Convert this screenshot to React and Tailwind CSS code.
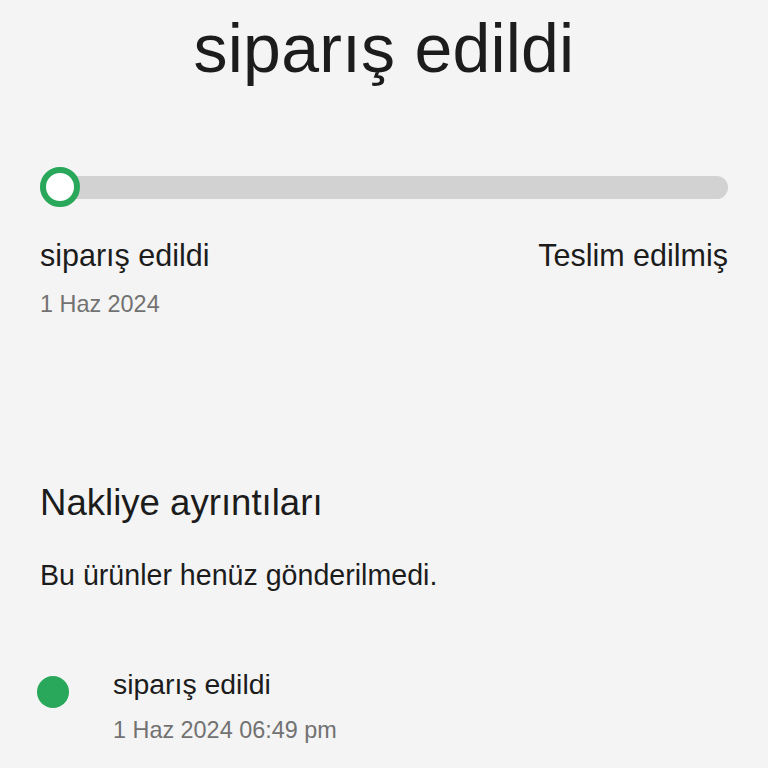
export default function App() {
  const font = { fontFamily: '"Liberation Sans", Arial, sans-serif' };
  return (
    <div className="w-[768px] h-[768px] bg-[#f4f4f4] overflow-hidden text-[#1c1c1c]" style={font}>
      <div className="pt-[14px] text-center text-[68px] leading-[68px] tracking-[0.2px]">siparış edildi</div>

      <div className="mx-[40px] mt-[85px] relative h-[40px] flex items-center">
        <div className="w-full h-[23px] rounded-full bg-[#d2d2d2]" />
        <div className="absolute left-0 top-0 w-[40px] h-[40px] rounded-full border-[6px] border-[#29a85b] bg-white" />
      </div>

      <div className="mx-[40px] mt-[30px] flex justify-between text-[30.5px] leading-[36px]">
        <span>siparış edildi</span>
        <span>Teslim edilmiş</span>
      </div>
      <div className="mx-[40px] mt-[16px] text-[23.4px] leading-[30px] text-[#727272]">1 Haz 2024</div>

      <div className="mx-[40px] mt-[162px] text-[36.6px] leading-[44px]">Nakliye ayrıntıları</div>
      <div className="mx-[40px] mt-[33px] text-[28.6px] leading-[34px]">Bu ürünler henüz gönderilmedi.</div>

      <div className="mt-[75px] flex">
        <div className="w-[113px] pl-[37px] pt-[9px]">
          <div className="w-[32px] h-[32px] rounded-full bg-[#29a85b]" />
        </div>
        <div>
          <div className="text-[28.4px] leading-[34px]">siparış edildi</div>
          <div className="mt-[15px] text-[23.4px] leading-[28px] text-[#727272]">1 Haz 2024 06:49 pm</div>
        </div>
      </div>
    </div>
  );
}
